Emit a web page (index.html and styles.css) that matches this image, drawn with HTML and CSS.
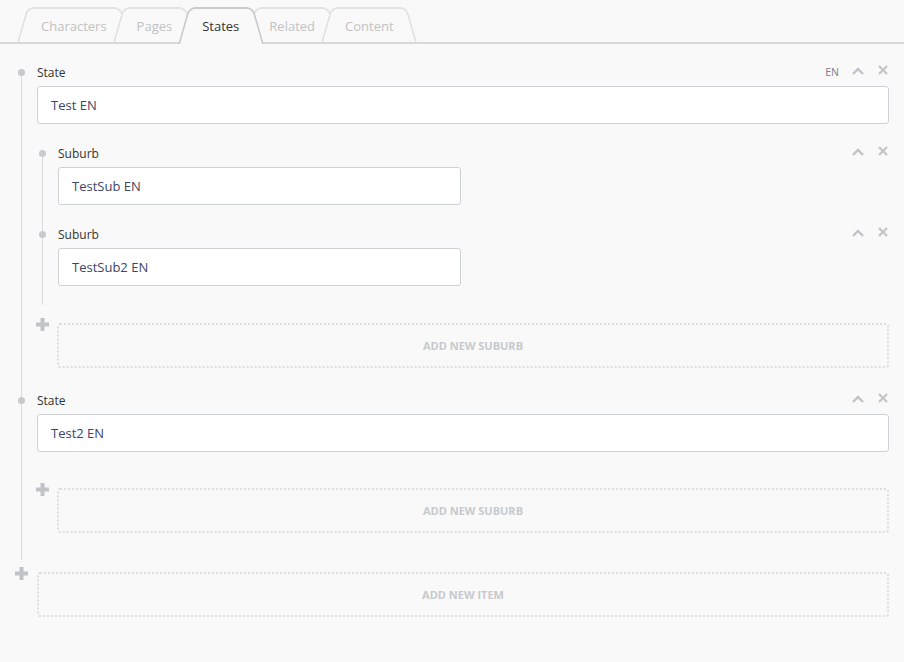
FILE: index.html
```html
<!DOCTYPE html>
<html lang="en">

<head>
    <meta charset="UTF-8">
    <meta name="viewport" content="width=device-width, initial-scale=1.0">
    <title>States</title>
    <link rel="stylesheet" href="styles.css">
</head>

<body>
    <!-- tabs -->
    <div class="tabs">
        <div class="tab">Characters</div>
        <div class="tab">Pages</div>
        <div class="tab active">States</div>
        <div class="tab">Related</div>
        <div class="tab">Content</div>
    </div>

    <div class="content">
        <div class="list">
            <!-- state 1 -->
            <div class="item">
                <div class="item-head">
                    <span class="dot"></span>
                    <span class="label">State</span>
                    <div class="controls">
                        <span class="lang">EN</span>
                        <svg class="up" width="12" height="8" viewBox="0 0 12 8"><polyline points="1,7 6,2 11,7" /></svg>
                        <svg class="close" width="10" height="10" viewBox="0 0 10 10"><line x1="1" y1="1" x2="9" y2="9" /><line x1="9" y1="1" x2="1" y2="9" /></svg>
                    </div>
                </div>
                <div class="field">Test EN</div>

                <div class="list sub">
                    <div class="item">
                        <div class="item-head">
                            <span class="dot"></span>
                            <span class="label">Suburb</span>
                            <div class="controls">
                                <svg class="up" width="12" height="8" viewBox="0 0 12 8"><polyline points="1,7 6,2 11,7" /></svg>
                                <svg class="close" width="10" height="10" viewBox="0 0 10 10"><line x1="1" y1="1" x2="9" y2="9" /><line x1="9" y1="1" x2="1" y2="9" /></svg>
                            </div>
                        </div>
                        <div class="field small">TestSub EN</div>
                    </div>
                    <div class="item">
                        <div class="item-head">
                            <span class="dot"></span>
                            <span class="label">Suburb</span>
                            <div class="controls">
                                <svg class="up" width="12" height="8" viewBox="0 0 12 8"><polyline points="1,7 6,2 11,7" /></svg>
                                <svg class="close" width="10" height="10" viewBox="0 0 10 10"><line x1="1" y1="1" x2="9" y2="9" /><line x1="9" y1="1" x2="1" y2="9" /></svg>
                            </div>
                        </div>
                        <div class="field small">TestSub2 EN</div>
                    </div>
                </div>
                <div class="add-row sub-add">
                    <svg class="plus" width="13" height="13" viewBox="0 0 13 13"><rect x="4.5" y="0" width="4" height="13" /><rect x="0" y="4.5" width="13" height="4" /></svg>
                    <div class="add-box">Add new suburb</div>
                </div>
            </div>

            <!-- state 2 -->
            <div class="item">
                <div class="item-head">
                    <span class="dot"></span>
                    <span class="label">State</span>
                    <div class="controls">
                        <svg class="up" width="12" height="8" viewBox="0 0 12 8"><polyline points="1,7 6,2 11,7" /></svg>
                        <svg class="close" width="10" height="10" viewBox="0 0 10 10"><line x1="1" y1="1" x2="9" y2="9" /><line x1="9" y1="1" x2="1" y2="9" /></svg>
                    </div>
                </div>
                <div class="field">Test2 EN</div>
                <div class="add-row sub-add empty">
                    <svg class="plus" width="13" height="13" viewBox="0 0 13 13"><rect x="4.5" y="0" width="4" height="13" /><rect x="0" y="4.5" width="13" height="4" /></svg>
                    <div class="add-box">Add new suburb</div>
                </div>
            </div>
        </div>

        <div class="add-row main-add">
            <svg class="plus" width="13" height="13" viewBox="0 0 13 13"><rect x="4.5" y="0" width="4" height="13" /><rect x="0" y="4.5" width="13" height="4" /></svg>
            <div class="add-box">Add new item</div>
        </div>
    </div>
</body>

</html>
```

FILE: styles.css
```css
* {
    margin: 0;
    padding: 0;
    box-sizing: border-box;
}

body {
    background-color: #f9f9f9;
    font-family: "Open Sans", "Noto Sans", sans-serif;
    color: #333;
}

/* tabs */
.tabs {
    display: flex;
    align-items: flex-end;
    height: 44px;
    border-bottom: 2px solid #d9d9d9;
}

.tab {
    position: relative;
    z-index: 0;
    height: 35px;
    padding: 3px 24px 0;
    margin-left: -18px;
    font-size: 13px;
    line-height: 33px;
    color: #c2c2c2;
}

.tab:first-child {
    margin-left: 17px;
}

.tab::before,
.tab::after {
    content: '';
    position: absolute;
    top: 0;
    bottom: 0;
    z-index: -1;
    background-color: #f9f9f9;
    border-top: 2px solid #e2e2e2;
}

.tab::before {
    left: 0;
    right: 50%;
    border-left: 2px solid #e2e2e2;
    border-top-left-radius: 7px;
    transform: skewX(-16deg);
    transform-origin: bottom left;
}

.tab::after {
    left: 50%;
    right: 0;
    border-right: 2px solid #e2e2e2;
    border-top-right-radius: 7px;
    transform: skewX(16deg);
    transform-origin: bottom right;
}

.tab.active {
    z-index: 1;
    height: 37px;
    margin-bottom: -2px;
    padding-bottom: 2px;
    color: #333;
}

.tab.active::before,
.tab.active::after {
    border-color: #cbcbcb;
}

/* items */
.content {
    padding: 18px 15px 40px 15px;
}

.list {
    position: relative;
    margin-left: 6px;
    padding-left: 16px;
    padding-bottom: 5px;
}

.list::before {
    content: '';
    position: absolute;
    left: 0;
    top: 10px;
    bottom: 0;
    width: 1px;
    background-color: #dcdcdc;
}

.list.sub {
    margin-top: 19px;
    margin-left: 5px;
    padding-bottom: 0;
}

.item {
    padding-bottom: 22px;
}

.list.sub .item {
    padding-bottom: 19px;
}

.item-head {
    position: relative;
    display: flex;
    align-items: center;
    height: 20px;
    margin-bottom: 4px;
}

.dot {
    position: absolute;
    left: -19px;
    top: 7px;
    width: 7px;
    height: 7px;
    border-radius: 50%;
    background-color: #c8cbce;
}

.label {
    font-size: 12px;
}

.controls {
    margin-left: auto;
    display: flex;
    align-items: center;
}

.lang {
    font-size: 10.5px;
    color: #7b7d88;
    margin-right: 13px;
}

.up {
    fill: none;
    stroke: #bfc3c7;
    stroke-width: 2.4;
    margin-right: 14px;
    margin-top: -3px;
}

.close {
    stroke: #c6c6c6;
    stroke-width: 2.4;
    margin-right: 1px;
    margin-top: -5px;
}

.field {
    height: 38px;
    padding: 0 13px;
    background-color: #fff;
    border: 1px solid #cfd2d5;
    border-radius: 3px;
    font-size: 13px;
    line-height: 36px;
    color: #3e4566;
}

.field.small {
    width: 403px;
}

/* add rows */
.add-row {
    display: flex;
    align-items: flex-start;
}

.plus {
    fill: #c0c4c8;
    flex-shrink: 0;
    margin-top: -5px;
}

.add-box {
    flex: 1;
    height: 45px;
    border: 2px dotted #dedede;
    border-radius: 3px;
    font-size: 11px;
    font-weight: bold;
    line-height: 41px;
    text-align: center;
    text-transform: uppercase;
    color: #c6c9cd;
}

.sub-add {
    margin-top: 18px;
    margin-left: -1px;
}

.sub-add .plus {
    margin-right: 8px;
}

.sub-add.empty {
    margin-top: 36px;
}

.main-add {
    margin-top: 12px;
}

.main-add .plus {
    margin-right: 9px;
}
```
